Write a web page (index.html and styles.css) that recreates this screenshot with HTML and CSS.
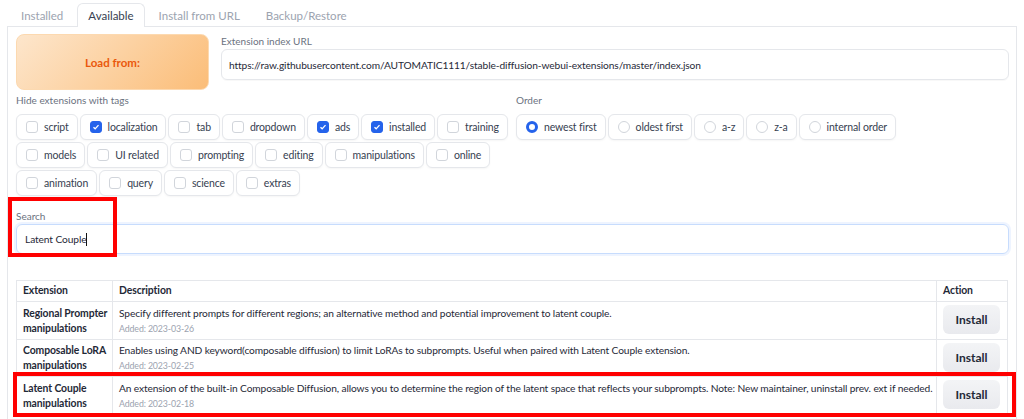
FILE: index.html
```html
<!DOCTYPE html>
<html lang="en">
<head>
    <meta charset="UTF-8">
    <title>Extensions</title>
    <link rel="stylesheet" href="styles.css">
</head>
<body>
    <div class="tabs">
        <button class="tab">Installed</button>
        <button class="tab selected">Available</button>
        <button class="tab">Install from URL</button>
        <button class="tab">Backup/Restore</button>
    </div>

    <div class="panel">
        <div class="load-row">
            <button class="load-btn">Load from:</button>
            <div class="field">
                <label>Extension index URL</label>
                <div class="input">https://raw.githubusercontent.com/AUTOMATIC1111/stable-diffusion-webui-extensions/master/index.json</div>
            </div>
        </div>

        <div class="filters">
            <div class="tag-group">
                <label>Hide extensions with tags</label>
                <div class="chips">
                    <span class="chip"><i class="box"></i>script</span>
                    <span class="chip"><i class="box on"></i>localization</span>
                    <span class="chip"><i class="box"></i>tab</span>
                    <span class="chip"><i class="box"></i>dropdown</span>
                    <span class="chip"><i class="box on"></i>ads</span>
                    <span class="chip"><i class="box on"></i>installed</span>
                    <span class="chip"><i class="box"></i>training</span>
                    <span class="chip"><i class="box"></i>models</span>
                    <span class="chip"><i class="box"></i>UI related</span>
                    <span class="chip"><i class="box"></i>prompting</span>
                    <span class="chip"><i class="box"></i>editing</span>
                    <span class="chip"><i class="box"></i>manipulations</span>
                    <span class="chip"><i class="box"></i>online</span>
                    <span class="chip"><i class="box"></i>animation</span>
                    <span class="chip"><i class="box"></i>query</span>
                    <span class="chip"><i class="box"></i>science</span>
                    <span class="chip"><i class="box"></i>extras</span>
                </div>
            </div>
            <div class="order-group">
                <label>Order</label>
                <div class="chips">
                    <span class="chip"><i class="radio on"></i>newest first</span>
                    <span class="chip"><i class="radio"></i>oldest first</span>
                    <span class="chip"><i class="radio"></i>a-z</span>
                    <span class="chip"><i class="radio"></i>z-a</span>
                    <span class="chip"><i class="radio"></i>internal order</span>
                </div>
            </div>
        </div>

        <div class="search">
            <label>Search</label>
            <div class="input focused">Latent Couple<span class="caret"></span></div>
            <div class="highlight search-mark"></div>
        </div>

        <div class="table-wrap">
            <table class="ext-table">
                <thead>
                    <tr>
                        <th class="col-ext">Extension</th>
                        <th>Description</th>
                        <th class="col-action">Action</th>
                    </tr>
                </thead>
                <tbody>
                    <tr>
                        <td class="name">Regional Prompter<br>manipulations</td>
                        <td class="desc"><span class="line">Specify different prompts for different regions; an alternative method and potential improvement to latent couple.</span><br><span class="added">Added: 2023-03-26</span></td>
                        <td class="action"><button class="install">Install</button></td>
                    </tr>
                    <tr>
                        <td class="name">Composable LoRA<br>manipulations</td>
                        <td class="desc"><span class="line">Enables using AND keyword(composable diffusion) to limit LoRAs to subprompts. Useful when paired with Latent Couple extension.</span><br><span class="added">Added: 2023-02-25</span></td>
                        <td class="action"><button class="install">Install</button></td>
                    </tr>
                    <tr>
                        <td class="name">Latent Couple<br>manipulations</td>
                        <td class="desc"><span class="line">An extension of the built-in Composable Diffusion, allows you to determine the region of the latent space that reflects your subprompts. Note: New maintainer, uninstall prev. ext if needed.</span><br><span class="added">Added: 2023-02-18</span></td>
                        <td class="action"><button class="install">Install</button></td>
                    </tr>
                </tbody>
            </table>
            <div class="highlight row-mark"></div>
        </div>
    </div>
</body>
</html>
```

FILE: styles.css
```css
* {
    margin: 0;
    padding: 0;
    box-sizing: border-box;
}

body {
    background: #fff;
    font-family: Lato, "Liberation Sans", sans-serif;
    color: #374151;
    font-size: 12px;
    overflow: hidden;
}

label {
    display: block;
    color: #6b7280;
    font-size: 10px;
}

.tabs {
    display: flex;
    gap: 2px;
    padding: 3px 0 0 9px;
    height: 26px;
}

.tab {
    font: inherit;
    font-size: 11.5px;
    color: #9ca3af;
    background: none;
    border: 1px solid transparent;
    border-bottom: none;
    border-radius: 6px 6px 0 0;
    padding: 0 11px;
    height: 23px;
}

.tab.selected {
    color: #374151;
    background: #fff;
    border-color: #e5e7eb;
    height: 24px;
    padding: 0 10px;
    position: relative;
    z-index: 2;
}

.panel {
    margin-left: 7px;
    width: 1010px;
    border: 1px solid #e5e7eb;
    border-bottom: none;
    padding: 7px 7px 0 8px;
    height: 400px;
}

.load-row {
    display: grid;
    grid-template-columns: 193px 1fr;
    gap: 12px;
}

.load-btn {
    height: 56px;
    border: 1px solid #fcd9b0;
    border-radius: 8px;
    background: linear-gradient(135deg, #fde6cc, #fbbd78);
    color: #ea580c;
    font: inherit;
    font-size: 11.5px;
    font-weight: bold;
}

.field label {
    padding-top: 1px;
    height: 15px;
}

.input {
    height: 31px;
    border: 1px solid #e5e7eb;
    border-radius: 6px;
    display: flex;
    align-items: center;
    padding: 0 7px;
    font-size: 10.2px;
    letter-spacing: -0.1px;
    color: #1f2937;
    box-shadow: 0 1px 1px rgba(0,0,0,0.03);
}

.filters {
    display: flex;
    gap: 6px;
    margin-top: 4px;
}

.tag-group {
    width: 494px;
}

.order-group {
    flex: 1;
}

.filters label {
    height: 13px;
    margin-bottom: 7px;
}

.chips {
    display: flex;
    flex-wrap: wrap;
    gap: 2px;
}

.chip {
    display: flex;
    align-items: center;
    gap: 6px;
    height: 26px;
    padding: 0 8px 0 9px;
    border: 1px solid #e5e7eb;
    border-radius: 6px;
    background: #fff;
    box-shadow: 0 1px 2px rgba(0,0,0,0.04);
    font-size: 10.5px;
    letter-spacing: -0.15px;
    color: #374151;
}

.box, .radio {
    width: 12px;
    height: 12px;
    border: 1px solid #d1d5db;
    border-radius: 3px;
    background: #fff;
    flex: none;
}

.box.on {
    border-color: #2563eb;
    background: #2563eb url("data:image/svg+xml,%3Csvg xmlns='http://www.w3.org/2000/svg' viewBox='0 0 12 12'%3E%3Cpath d='M3 6.2l2 2 4-4.4' fill='none' stroke='white' stroke-width='1.6'/%3E%3C/svg%3E") center/100% no-repeat;
}

.radio {
    border-radius: 50%;
}

.radio.on {
    border: 3.5px solid #2563eb;
}

.search {
    position: relative;
    margin-top: 14px;
}

.search label {
    height: 13px;
    margin-bottom: 1px;
}

.input.focused {
    height: 30px;
    border: 1.5px solid #c7dcfd;
    box-shadow: 0 0 0 2px #eef4ff;
    padding-left: 8px;
}

.caret {
    display: inline-block;
    width: 1px;
    height: 13px;
    background: #111;
}

.highlight {
    position: absolute;
    border: 4px solid #ff0000;
    pointer-events: none;
}

.search-mark {
    left: -8px;
    top: -13px;
    width: 109px;
    height: 60px;
}

.table-wrap {
    position: relative;
    margin-top: 26px;
}

.ext-table {
    width: 992px;
    border-collapse: collapse;
    font-size: 10.4px;
    letter-spacing: -0.1px;
    color: #1f2937;
}

.ext-table th, .ext-table td {
    border: 1px solid #e5e7eb;
    text-align: left;
    vertical-align: top;
    padding: 3px 6px;
}

.ext-table th {
    font-weight: bold;
    height: 21px;
}

.col-ext {
    width: 96px;
}

.col-action {
    width: 71px;
}

.ext-table td {
    line-height: 15px;
    height: 37px;
    padding: 3.5px 6px 3px;
}

.ext-table td.name {
    white-space: nowrap;
    font-weight: bold;
    padding-right: 4px;
}

.ext-table td.desc {
    font-size: 10.2px;
    letter-spacing: -0.12px;
    padding-right: 2px;
}

.line {
    white-space: nowrap;
}

.added {
    color: #9ca3af;
    font-size: 8.8px;
}

.ext-table td.action {
    padding: 3px 6px;
}

.install {
    width: 57px;
    height: 29px;
    border: none;
    border-radius: 6px;
    background: linear-gradient(#f3f4f6, #e9eaee);
    color: #1f2937;
    font: inherit;
    font-size: 12px;
    font-weight: bold;
}

.row-mark {
    left: -3px;
    top: 92px;
    width: 1003px;
    height: 45px;
}
```
